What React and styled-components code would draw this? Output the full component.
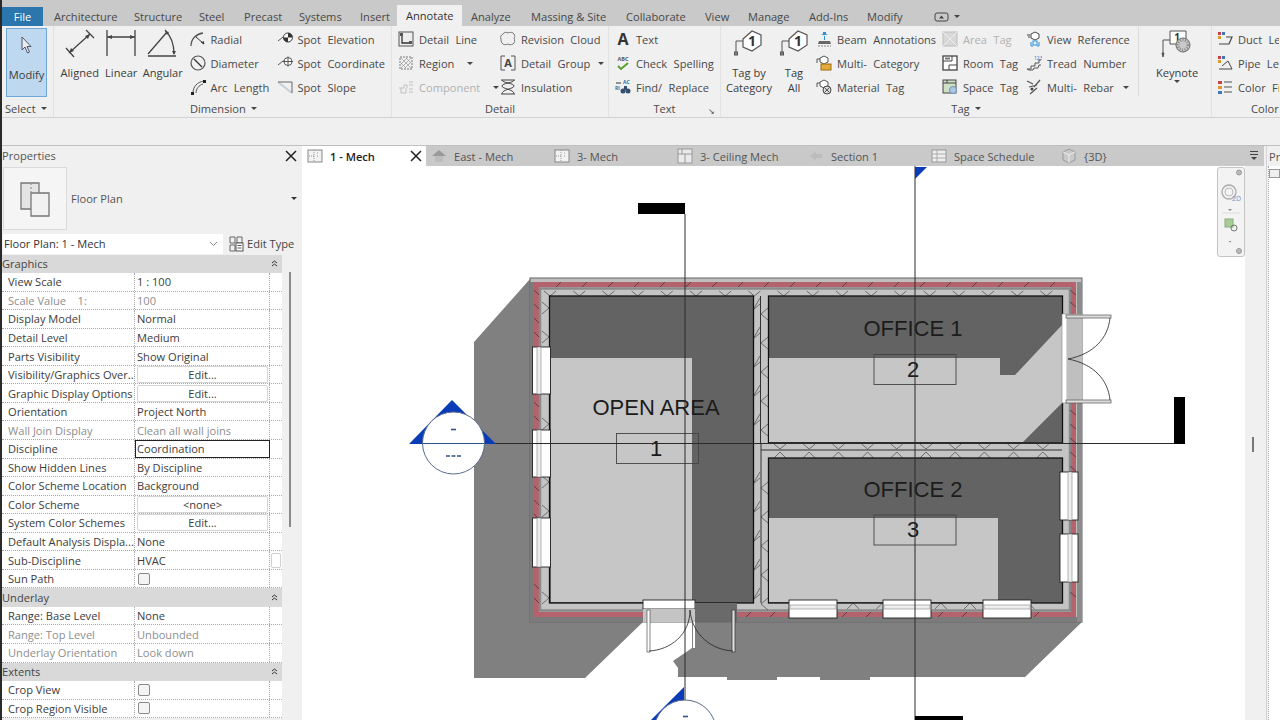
import styled, { createGlobalStyle } from "styled-components";

const GlobalStyle = createGlobalStyle`
html, body { margin:0; padding:0; background:#f0f0f0; }
body { font-family:"Open Sans","Noto Sans",sans-serif; font-size:11.1px; color:#3c3c3c; }
`

const Page = styled.div`
width:1280px;
height:720px;
overflow:hidden;
display:flex;
flex-direction:column;
border-left:2px solid #2a2a2a;
box-sizing:border-box;
`
const TabBar = styled.div`
height:26px;
flex:none;
background:#c9c9c9;
display:flex;
align-items:flex-end;
`
const FileTab = styled.div`
width:41px;
height:19px;
margin-right:2px;
background:#2a76ad;
color:#fff;
display:flex;
align-items:center;
justify-content:center;
`
const TopTab = styled.div`
width:${p => p.$w}px;
height:${p => p.$active ? 21 : 19}px;
padding-left:9px;
box-sizing:border-box;
display:flex;
align-items:center;
background:${p => p.$active ? "#f0f0f0" : "transparent"};
color:${p => p.$active ? "#333" : "#484848"};
`
const TabExtras = styled.div`
display:flex;
align-items:center;
gap:5px;
height:19px;
margin-left:9px;
`
const Caret = styled.span`
display:inline-block;
flex:none;
width:0;
height:0;
border-left:3px solid transparent;
border-right:3px solid transparent;
border-top:3px solid ${p => p.$color || "#444"};
margin-left:${p => p.$left || 0}px;
margin-right:${p => p.$right || 0}px;
`
const Ribbon = styled.div`
height:92px;
flex:none;
display:flex;
background:#f0f0f0;
border-bottom:1px solid #d2d2d2;
box-sizing:border-box;
`
const Panel = styled.div`
width:${p => p.$w}px;
flex:none;
display:flex;
flex-direction:column;
border-right:1px solid ${p => p.$noLine ? "transparent" : "#e2e2e2"};
box-sizing:border-box;
`
const PanelBody = styled.div`
height:72px;
margin-top:1px;
display:flex;
padding-left:${p => p.$pad || 0}px;
overflow:hidden;
`
const PanelTitle = styled.div`
height:17px;
margin-top:1px;
display:flex;
align-items:center;
justify-content:${p => p.$left ? "flex-start" : "center"};
padding-left:${p => p.$left || 0}px;
position:relative;
color:#484848;
`
const LaunchMark = styled.span`
position:absolute;
right:5px;
top:5px;
font-size:8px;
color:#444;
`
const ModifyButton = styled.div`
width:41px;
height:69px;
margin:1px 0 0 4px;
background:#bdd8ef;
border:1px solid #6ea8d8;
box-sizing:border-box;
display:flex;
flex-direction:column;
align-items:center;
padding-top:7px;
gap:11px;
`
const BigTool = styled.div`
width:${p => p.$w}px;
flex:none;
display:flex;
flex-direction:column;
align-items:center;
line-height:15px;
text-align:center;
`
const BigIcon = styled.div`
height:36px;
flex:none;
display:flex;
align-items:flex-start;
justify-content:center;
margin:1px 0;
`
const ToolColumn = styled.div`
width:${p => p.$w}px;
margin-left:${p => p.$left || 0}px;
flex:none;
display:flex;
flex-direction:column;
`
const Tool = styled.div`
height:24px;
display:flex;
align-items:center;
gap:5px;
white-space:nowrap;
word-spacing:3.5px;
color:${p => p.$off ? "#b0b0b0" : "#484848"};
`
const Divider = styled.div`
width:1px;
height:69px;
background:#dcdcdc;
flex:none;
`
const OptionsBand = styled.div`
height:28px;
flex:none;
background:#f0f0f0;
border-bottom:1px solid #c0c0c0;
box-sizing:border-box;
`
const Workspace = styled.div`
flex:1;
display:flex;
min-height:0;
`
const Properties = styled.div`
width:298px;
flex:none;
display:flex;
flex-direction:column;
position:relative;
background:#f0f0f0;
`
const PropsHeader = styled.div`
height:19.5px;
flex:none;
display:flex;
align-items:center;
justify-content:space-between;
padding:0 3px 0 0;
color:#555;
`
const TypeRow = styled.div`
height:66px;
flex:none;
display:flex;
align-items:center;
`
const Thumb = styled.div`
width:64px;
height:63px;
margin-left:1px;
background:#f5f5f5;
border:1px solid #dadada;
box-sizing:border-box;
display:flex;
align-items:center;
justify-content:center;
`
const TypeName = styled.div`
margin-left:4px;
flex:1;
color:#555;
`
const SelectorRow = styled.div`
height:20px;
margin-top:2px;
flex:none;
display:flex;
align-items:center;
`
const Combo = styled.div`
width:220px;
height:20px;
margin-left:1px;
background:#fff;
box-sizing:border-box;
padding:0 5px 0 1px;
display:flex;
align-items:center;
justify-content:space-between;
color:#333;
`
const EditType = styled.div`
display:flex;
align-items:center;
gap:2px;
margin-left:6px;
color:#444;
`
const PropList = styled.div`
width:280px;
margin-top:1px;
flex:1;
overflow:hidden;
`
const GroupRow = styled.div`
height:18.55px;
background:#d9d9d9;
display:flex;
align-items:center;
justify-content:space-between;
padding-right:4px;
box-sizing:border-box;
color:#444;
`
const PropRow = styled.div`
height:18.55px;
display:grid;
grid-template-columns:133px 135px 12px;
background:#fff;
box-sizing:border-box;
border-bottom:1px dotted #a8a8a8;
`
const NameCell = styled.div`
padding-left:6px;
display:flex;
align-items:center;
white-space:pre;
overflow:hidden;
color:${p => p.$off ? "#8e8e8e" : "#3c3c3c"};
border-right:1px dotted #a8a8a8;
`
const ValueCell = styled.div`
padding-left:2px;
display:flex;
align-items:center;
white-space:nowrap;
box-sizing:border-box;
color:${p => p.$off ? "#8e8e8e" : "#3c3c3c"};
border-right:1px dotted #a8a8a8;
outline:${p => p.$selected ? "1px solid #222" : "none"};
outline-offset:-1px;
`
const EditButton = styled.div`
flex:1;
height:15px;
margin-right:1px;
border:1px solid #d5d5d5;
border-radius:2px;
display:flex;
align-items:center;
justify-content:center;
`
const CheckBox = styled.span`
width:10px;
height:10px;
margin-left:1px;
border:1px solid #8a8a8a;
border-radius:2px;
background:#f4f4f4;
`
const ExtraCell = styled.div`
display:flex;
align-items:center;
justify-content:center;
`
const SpinBox = styled.span`
width:8px;
height:13px;
border:1px solid #d0d0d0;
border-radius:2px;
`
const PropScroll = styled.div`
position:absolute;
left:287px;
top:126px;
width:2px;
height:255px;
background:#8a8a8a;
`
const ViewArea = styled.div`
width:962px;
margin-left:2px;
flex:none;
display:flex;
flex-direction:column;
`
const ViewTabs = styled.div`
height:20px;
flex:none;
background:#c9c9c9;
display:flex;
position:relative;
`
const ViewTab = styled.div`
width:${p => p.$w}px;
flex:none;
box-sizing:border-box;
padding-left:${p => p.$pad}px;
display:flex;
align-items:center;
gap:7px;
white-space:nowrap;
background:${p => p.$active ? "#fff" : "transparent"};
color:${p => p.$active ? "#222" : "#555"};
font-weight:${p => p.$active ? 600 : 400};
`
const TabClose = styled.span`
margin-left:auto;
margin-right:4px;
display:flex;
`
const TabMenu = styled.div`
position:absolute;
right:6px;
top:5px;
display:flex;
flex-direction:column;
gap:2px;
align-items:center;
`
const MenuBar = styled.span`
width:8px;
height:1px;
background:#444;
`
const CanvasRow = styled.div`
flex:1;
display:flex;
min-height:0;
background:#fff;
`
const Canvas = styled.div`
width:943px;
flex:none;
position:relative;
overflow:hidden;
`
const PlanSvg = styled.svg`
display:block;
width:943px;
height:554px;
`
const NavBar = styled.div`
position:absolute;
right:0;
top:1px;
width:28px;
height:90px;
box-sizing:border-box;
background:#f3f3f3;
border:1px solid #c4c4c4;
border-radius:3px;
`
const ViewScroll = styled.div`
width:19px;
flex:none;
background:#f0f0f0;
position:relative;
`
const ScrollThumb = styled.div`
position:absolute;
left:7px;
top:271px;
width:2px;
height:15px;
background:#777;
`
const RightPanel = styled.div`
flex:1;
display:flex;
flex-direction:column;
margin-left:2px;
overflow:hidden;
background:#f0f0f0;
border-left:1px solid #d4d4d4;
`
const RightHead = styled.div`
height:20px;
padding-left:2px;
display:flex;
align-items:center;
color:#555;
`
const RightBody = styled.div`
flex:1;
margin:0 0 0 1px;
background:#fff;
padding-top:3px;
border-left:1px dotted #aaa;
`
const MinusBox = styled.div`
width:9px;
height:7px;
border:1px solid #999;
background:#eee;
`

const Ico = ({ w = 16, h = 16, children }) => (
   <svg width={w} height={h} viewBox={`0 0 ${w} ${h}`} fill="none" stroke="#555" strokeWidth="1" style={{ flex: "none" }}>{children}</svg>
)

const HexTag = ({ x = 0 }) => (
   <g transform={`translate(${x} 0)`}>
      <path d="M2 25V13H9" stroke="#555" />
      <rect x="0.5" y="24" width="3" height="3" fill="#888" stroke="#555" />
      <path d="M9 11L18 3l9 4v10l-9 6-9-4z" fill="#fff" stroke="#555" strokeWidth="1.2" />
      <text x="18" y="18" fontSize="14" fontWeight="700" fill="#333" stroke="none" textAnchor="middle" fontFamily="Open Sans">1</text>
   </g>
)

const icons = {
   cursor: <Ico h={20}><path d="M3 1l0 13 3-3 2.500 6 2-1-2.500-5.500 4 0z" fill="#e8edf2" stroke="#556" /></Ico>,
   aligned: <Ico w={36} h={30}><path d="M7 25L28 6M4 20l8 9M24 2l8 8" stroke="#444" strokeWidth="1.300" /><path d="M7 25l2-5 3 3zM28 6l-5 2 3 3z" fill="#444" stroke="none" /></Ico>,
   linear: <Ico w={32} h={30}><path d="M2 2v26M30 2v26M2 9h28" stroke="#444" strokeWidth="1.300" /><path d="M2 9l5-2v4zM30 9l-5-2v4z" fill="#444" stroke="none" /></Ico>,
   angular: <Ico w={32} h={30}><path d="M1 26L20 4M1 28h28M18 2c6 6 9 14 9 24" stroke="#444" strokeWidth="1.300" /><path d="M18 3l4 1-2 3zM27 27l-2-4 4 0z" fill="#444" stroke="none" /></Ico>,
   radial: <Ico><path d="M1 15C1 8 6 3 13 2" strokeWidth="1.300" /><path d="M6 6l8 7M11 11l3 2-1-3" stroke="#333" /></Ico>,
   diameter: <Ico><circle cx="8" cy="8" r="7" strokeWidth="1.200" /><path d="M4 4l8 8" stroke="#333" strokeWidth="1.300" /></Ico>,
   arc: <Ico><path d="M3 14C3 8 7 3 14 2M6 14C6 10 9 6 13 5" /><rect x="1" y="13" width="3" height="3" fill="#222" stroke="none" /><rect x="13" y="1" width="3" height="3" fill="#222" stroke="none" /></Ico>,
   spotElev: <Ico><path d="M1 10l5-4h9" /><path d="M11 2a4.500 4.500 0 1 1-.1 0z" fill="#fff" stroke="#333" /><path d="M11 2a4.500 4.500 0 0 1 4.500 4.500H11zM11 6.500H6.500A4.500 4.500 0 0 0 11 11z" fill="#333" stroke="none" /></Ico>,
   spotCoord: <Ico><path d="M1 10l5-4h9" /><circle cx="11" cy="6.500" r="4" fill="#fff" /><path d="M11 1.500v10M6 6.500h10" /></Ico>,
   spotSlope: <Ico><path d="M1 3l14 11" stroke="#c3d0dc" strokeWidth="2" /><path d="M1 3h14v11" stroke="#666" /></Ico>,
   detailLine: <Ico><rect x="1" y="1" width="14" height="14" fill="#eee" /><path d="M4 3v9h9" stroke="#333" strokeWidth="1.300" /><rect x="2" y="2" width="3" height="3" fill="#555" stroke="none" /><rect x="11" y="10" width="3" height="3" fill="#555" stroke="none" /></Ico>,
   region: <Ico><rect x="2" y="2" width="12" height="12" stroke="#777" strokeDasharray="2 1" /><path d="M3 9l6-6M3 13L13 3M7 13l6-6M3 3l10 10M8 3l5 5M3 8l5 5" stroke="#888" strokeWidth=".6" /></Ico>,
   component: <Ico><path d="M1 9h5V6h3v3h0M3 9v5h5V9M11 3h4M11 6h4M11 10h4M11 13h4" stroke="#c0c0c0" /></Ico>,
   cloud: <Ico><path d="M3 3c1-2 4-2 5-1 2-1 5-1 6 1 1 2 1 3 0 4 1 2 1 5-1 6-2 1-4 1-5 0-2 1-5 1-6-1-1-1-1-3-1-4-1-2 0-4 2-5z" stroke="#777" /></Ico>,
   detailGroup: <Ico><path d="M5 1H1v14h4M11 1h4v14h-4" stroke="#555" /><text x="8" y="12" fontSize="11" fontWeight="700" fill="#444" stroke="none" textAnchor="middle" fontFamily="Open Sans">A</text></Ico>,
   insulation: <Ico><path d="M2 1c0 3 12 3 12 6S2 10 2 15M14 1c0 3-12 3-12 6s12 3 12 8M1 1h14M1 15h14" stroke="#444" /></Ico>,
   textA: <Ico><text x="8" y="14" fontSize="16" fontWeight="700" fill="#333" stroke="none" textAnchor="middle" fontFamily="Open Sans">A</text></Ico>,
   spell: <Ico><text x="8" y="6" fontSize="5.500" fontWeight="700" fill="#555" stroke="none" textAnchor="middle" fontFamily="Open Sans">ABC</text><path d="M3 11l3 3 7-6" stroke="#5aa02c" strokeWidth="2" /></Ico>,
   find: <Ico><text x="0" y="11" fontSize="5" fontWeight="700" fill="#2a6fb5" stroke="none" fontFamily="Open Sans">Rl</text><text x="8" y="5" fontSize="5" fontWeight="700" fill="#2a6fb5" stroke="none" fontFamily="Open Sans">AC</text><path d="M1 4h5" stroke="#333" /><circle cx="8" cy="12" r="2.500" fill="#35516f" stroke="none" /><circle cx="13" cy="12" r="2.500" fill="#35516f" stroke="none" /><path d="M9 7h3v4H9z" fill="#35516f" stroke="none" /></Ico>,
   beam: <Ico><path d="M7 1h3v2l2 1H5l2-1z" fill="#2b8fd6" stroke="none" /><path d="M8.500 5v4" stroke="#2b8fd6" /><path d="M3 10h11l1 3H2z" fill="#666" stroke="none" /><path d="M2 15h13" stroke="#888" strokeDasharray="2 1" /></Ico>,
   multiCat: <Ico><path d="M1 8V4h3" /><path d="M4 3l4-2 4 2v4l-4 2-4-2z" fill="#fff" /><rect x="5" y="9" width="10" height="6" fill="#e5ab3a" stroke="#9a6d12" /></Ico>,
   material: <Ico><path d="M1 8V4h3" /><path d="M4 3l4-2 4 2v4l-4 2-4-2z" fill="#fff" /><circle cx="11" cy="11" r="4" fill="#ddd" stroke="#444" /><path d="M8.500 8.500l5 5M13.500 8.500l-5 5" stroke="#555" /></Ico>,
   areaTag: <Ico><rect x="1" y="1" width="14" height="14" fill="#d8d8d8" stroke="#bdbdbd" /><path d="M1 1l14 14M15 1L1 15" stroke="#eee" /></Ico>,
   roomTag: <Ico><rect x="1" y="1" width="14" height="14" fill="#fff" stroke="#444" strokeWidth="1.300" /><path d="M1 6h9V1M7 15v-5h8" stroke="#444" /><rect x="3" y="2.500" width="5" height="2" fill="#777" stroke="none" /></Ico>,
   spaceTag: <Ico><rect x="1" y="1" width="13" height="13" fill="#cfe0c6" stroke="#444" /><path d="M1 4h13M5 1v3" stroke="#444" /><circle cx="11" cy="11" r="3.500" fill="#a9c6e2" stroke="#7492b2" /></Ico>,
   viewRef: <Ico><path d="M1 4h3M2 6h2" stroke="#444" /><path d="M5 3l4-2 4 2v4l-4 2-4-2z" fill="#fff" stroke="#444" /><path d="M5 11v4h2M13 11v4h-2" stroke="#2b8fd6" /><rect x="7" y="10" width="4" height="4" stroke="#2b8fd6" /></Ico>,
   tread: <Ico><path d="M1 14h4v-3h4V8h4V5h2M1 14l2 1h4l1-2h4l1-3h2" stroke="#555" /><text x="8" y="5" fontSize="5" fill="#2b6fb5" stroke="none" fontFamily="Open Sans">123</text></Ico>,
   rebar: <Ico><path d="M1 2l6 3M14 1l-6 7M11 9l-7 6M3 8l8-2" stroke="#555" strokeWidth="1.200" /><circle cx="6" cy="10" r="1.500" fill="#444" stroke="none" /></Ico>,
   keynote: <Ico w={36} h={36}><path d="M4 25V12h7" stroke="#555" /><path d="M3 25l1 4 1-4z" fill="#555" /><path d="M11 3h16v13H11z" fill="#fff" stroke="#555" /><text x="18" y="13" fontSize="10" fontWeight="700" fill="#333" stroke="none" textAnchor="middle" fontFamily="Open Sans">1</text><circle cx="24" cy="17" r="7" fill="#c9c9c9" stroke="#666" /><circle cx="24" cy="17" r="5" fill="none" stroke="#888" strokeDasharray="1 1.500" strokeWidth="3" /></Ico>,
   duct: <Ico><rect x="1" y="1" width="3" height="3" fill="#c84444" stroke="none" /><rect x="5" y="1" width="3" height="3" fill="#3f78b8" stroke="none" /><rect x="1" y="5" width="3" height="3" fill="#d89a2e" stroke="none" /><path d="M2 13h10l3-7H9" stroke="#444" strokeWidth="1.200" /></Ico>,
   pipe: <Ico><rect x="1" y="1" width="3" height="3" fill="#c84444" stroke="none" /><rect x="5" y="1" width="3" height="3" fill="#3f78b8" stroke="none" /><rect x="1" y="5" width="3" height="3" fill="#d89a2e" stroke="none" /><path d="M2 14h13M5 11l6-5 4 8" stroke="#444" /></Ico>,
   colorFill: <Ico><rect x="1" y="2" width="4" height="3" fill="#c84444" stroke="none" /><rect x="1" y="7" width="4" height="3" fill="#d89a2e" stroke="none" /><rect x="1" y="12" width="4" height="3" fill="#3f78b8" stroke="none" /><path d="M7 3h8M7 8h8M7 13h8" /></Ico>,
   editType: <Ico><path d="M1 1h5v6H1zM8 1h5v6H8zM1 9h5v6H1z" stroke="#666" /><rect x="7" y="7" width="7" height="8" fill="#fff" stroke="#555" /><path d="M8.500 9.500h4M8.500 12h4" /></Ico>,
   plan: <Ico><rect x="1" y="2" width="14" height="12" fill="#f2f2f2" stroke="#888" /><path d="M7 2v6H1M7 8v6M10 5h2M10 8h2" stroke="#999" strokeDasharray="1 1" /></Ico>,
   elevation: <Ico><path d="M1 8l7-6 7 6z" fill="#9a9a9a" stroke="none" /><rect x="4" y="8" width="8" height="6" fill="#bcbcbc" stroke="none" /></Ico>,
   ceiling: <Ico><rect x="1" y="1" width="14" height="14" fill="#e9e9e9" stroke="#999" /><path d="M1 6h14M8 6v9M5 1v5" stroke="#999" /></Ico>,
   section: <Ico><path d="M2 8l6-5v3h6v4H8v3z" fill="#bdbdbd" stroke="none" /></Ico>,
   schedule: <Ico><rect x="1" y="2" width="14" height="12" fill="#eee" stroke="#999" /><path d="M1 6h14M1 10h14M6 2v12" stroke="#aaa" /></Ico>,
   box3d: <Ico><path d="M8 1l6 3v8l-6 3-6-3V4z" fill="#c9c9c9" stroke="#999" /><path d="M2 4l6 3 6-3M8 7v8" stroke="#eee" /></Ico>,
   close: <Ico w={12} h={12}><path d="M1 1l10 10M11 1L1 11" stroke="#222" strokeWidth="1.500" /></Ico>,
   upBox: <Ico w={15} h={10}><rect x="1" y="1" width="13" height="8" rx="2" stroke="#444" /><path d="M5 6.500h5L7.500 3.500z" fill="#444" stroke="none" /></Ico>,
   chevrons: <Ico w={7} h={7}><path d="M1 3l2.500-2L6 3M1 6l2.500-2L6 6" stroke="#333" /></Ico>,
   chevronDown: <Ico w={9} h={6}><path d="M1 1l3.500 3.500L8 1" stroke="#888" /></Ico>,
   bigPlan: <Ico w={32} h={36}><path d="M2 2h18v26H2z" fill="#e4e4e4" stroke="#777" strokeWidth="1.300" /><path d="M12 12h18v23H12z" fill="#f1f1f1" stroke="#777" strokeWidth="1.300" /><path d="M12 12V2M20 12h10" stroke="#888" strokeDasharray="2 2" /></Ico>,
}

const topTabs = [
   { label: "Architecture", w: 80 }, { label: "Structure", w: 65 }, { label: "Steel", w: 45 }, { label: "Precast", w: 55 },
   { label: "Systems", w: 61 }, { label: "Insert", w: 46 }, { label: "Annotate", w: 65, active: true }, { label: "Analyze", w: 60 },
   { label: "Massing & Site", w: 95 }, { label: "Collaborate", w: 79 }, { label: "View", w: 43 }, { label: "Manage", w: 61 },
   { label: "Add-Ins", w: 58 }, { label: "Modify", w: 67 },
]

const viewTabs = [
   { label: "East - Mech", w: 124, pad: 5, icon: "elevation" }, { label: "3- Mech", w: 123, pad: 4, icon: "plan" },
   { label: "3- Ceiling Mech", w: 131, pad: 4, icon: "ceiling" }, { label: "Section 1", w: 123, pad: 4, icon: "section" },
   { label: "Space Schedule", w: 130, pad: 4, icon: "schedule" }, { label: "{3D}", w: 100, pad: 4, icon: "box3d" },
]

const rows = [
   { group: "Graphics" },
   { name: "View Scale", value: "1 : 100" },
   { name: "Scale Value    1:", value: "100", off: true },
   { name: "Display Model", value: "Normal" },
   { name: "Detail Level", value: "Medium" },
   { name: "Parts Visibility", value: "Show Original" },
   { name: "Visibility/Graphics Over...", button: "Edit..." },
   { name: "Graphic Display Options", button: "Edit..." },
   { name: "Orientation", value: "Project North" },
   { name: "Wall Join Display", value: "Clean all wall joins", off: true },
   { name: "Discipline", value: "Coordination", selected: true },
   { name: "Show Hidden Lines", value: "By Discipline" },
   { name: "Color Scheme Location", value: "Background" },
   { name: "Color Scheme", button: "<none>" },
   { name: "System Color Schemes", button: "Edit..." },
   { name: "Default Analysis Displa...", value: "None" },
   { name: "Sub-Discipline", value: "HVAC", spin: true },
   { name: "Sun Path", check: true },
   { group: "Underlay" },
   { name: "Range: Base Level", value: "None" },
   { name: "Range: Top Level", value: "Unbounded", off: true },
   { name: "Underlay Orientation", value: "Look down", off: true },
   { group: "Extents" },
   { name: "Crop View", check: true },
   { name: "Crop Region Visible", check: true },
]

const SmallTool = ({ icon, label, off, drop }) => (
   <Tool $off={off}>
      {icons[icon]}
      <span>{label}</span>
      {drop && <Caret $left={drop} $color={"#444"} />}
   </Tool>
)

const range = (from, to, step) => {
   const out = []
   for (let v = from; v <= to; v += step) out.push(v)
   return out
}

// wall hatch, V marks along the insulation and short ticks on the red band
const wallMarks = [
   ...range(550, 1050, 29.200).map(x => `M${x - 6} 291L${x} 296L${x + 6} 291`),
   ...range(678, 1050, 29.200).filter(x => x < 640 || x > 770).map(x => `M${x - 6} 609L${x} 603L${x + 6} 609`),
   ...range(308, 600, 29).filter(y => y < 345 || (y > 395 && y < 428) || (y > 480 && y < 515) || y > 570).map(y => `M542 ${y - 6}L549 ${y}L542 ${y + 6}`),
   ...range(310, 600, 29).filter(y => y < 442 || y > 460).map(y => `M753 ${y}L760 ${y - 6}M760 ${y - 12}L753 ${y}M768 ${y + 10}L761 ${y + 4}L768 ${y - 2}`),
   ...range(780, 1050, 29.200).map(x => `M${x - 6} 444L${x} 449L${x + 6} 444M${x - 6} 458L${x} 452L${x + 6} 458`),
]
const redTicks = [
   ...range(556, 1060, 26).map(x => `M${x} 287L${x + 5} 282`),
   ...range(290, 600, 14).filter(y => y < 345 || (y > 395 && y < 428) || (y > 480 && y < 515) || y > 570).map(y => `M534 ${y}L539 ${y + 5}`),
   ...range(650, 1050, 24).filter(x => x < 640 || x > 740).map(x => `M${x} 617L${x + 5} 612`),
   ...range(290, 310, 12).map(y => `M1070 ${y}L1076 ${y + 5}`),
   ...range(410, 600, 14).filter(y => y < 468 || (y > 522 && y < 532) || y > 584).map(y => `M1070 ${y}L1076 ${y + 5}`),
]

const FloorPlan = () => (
   <PlanSvg viewBox="302 166 943 554" fontFamily="Liberation Sans">
      <path d="M530 279L474 342V678H585L643 622H530z" fill="#808080" />
      <path d="M692 622V648L673 661L678 668V677H727V680H777V677H820V680H870V677H1025L1082 622z" fill="#808080" />
      <rect x="530" y="278" width="552" height="344" fill="#bfbfbf" stroke="#666" />
      <rect x="530" y="282" width="4" height="340" fill="#7b7b7b" />
      <rect x="530" y="617" width="552" height="5" fill="#7b7b7b" />
      <rect x="1077" y="282" width="5" height="340" fill="#8c8c8c" />
      <rect x="536.500" y="284.500" width="537" height="330" fill="none" stroke="#b4636c" strokeWidth="5" />
      <rect x="540" y="288.500" width="530" height="322" fill="#c4c4c4" stroke="#8a8a8a" strokeWidth="2.500" />
      <path d={redTicks.join("")} stroke="#333" strokeWidth=".7" fill="none" />
      <path d={wallMarks.join("")} stroke="#555" strokeWidth=".8" fill="none" />

      <rect x="549.500" y="296" width="204" height="307" fill="#636363" stroke="#111" strokeWidth="1.300" />
      <rect x="551" y="358" width="141" height="244" fill="#c6c6c6" />
      <rect x="768.500" y="296" width="294" height="147" fill="#636363" stroke="#111" strokeWidth="1.300" />
      <path d="M769 358H1000V375H1015L1062 325V403L1023 442H769z" fill="#c6c6c6" />
      <rect x="768.500" y="458" width="294" height="145" fill="#636363" stroke="#111" strokeWidth="1.300" />
      <rect x="769" y="518" width="229" height="84" fill="#c6c6c6" />
      <path d="M760.500 296V443M761 443V603M761 450H1062" stroke="#222" strokeWidth=".9" fill="none" />

      <rect x="1062" y="314" width="5" height="89" fill="#fff" stroke="#888" strokeWidth=".6" />
      <rect x="1067" y="314" width="15" height="89" fill="#bfbfbf" />
      <rect x="1066" y="315" width="45" height="3" fill="#ddd" stroke="#555" strokeWidth=".7" />
      <rect x="1066" y="400" width="45" height="3" fill="#ddd" stroke="#555" strokeWidth=".7" />
      <path d="M1110 318C1108 338 1094 354 1068 359C1094 364 1108 380 1110 400" stroke="#222" strokeWidth=".8" fill="none" />

      {[347, 430, 518].map(y => (
         <g key={y}>
            <rect x="532.500" y={y} width="18" height={y === 518 ? 49 : 47} fill="#fff" stroke="#222" strokeWidth=".9" />
            <rect x="537" y={y} width="4" height={y === 518 ? 49 : 47} fill="#eee" stroke="#888" strokeWidth=".6" />
         </g>
      ))}
      {[472, 534].map(y => (
         <g key={y}>
            <rect x="1060" y={y} width="18" height="48" fill="#fff" stroke="#222" strokeWidth=".9" />
            <rect x="1068" y={y} width="4" height="48" fill="#eee" stroke="#888" strokeWidth=".6" />
         </g>
      ))}
      {[789, 883, 983].map(x => (
         <g key={x}>
            <rect x={x} y="600" width="48" height="18" fill="#fff" stroke="#222" strokeWidth=".9" />
            <rect x={x + 1} y="605" width="46" height="4" fill="#eee" stroke="#888" strokeWidth=".6" />
         </g>
      ))}

      <rect x="643" y="600" width="52" height="9" fill="#fff" stroke="#222" strokeWidth=".9" />
      <rect x="695" y="603" width="42" height="19" fill="#6a6a6a" />
      <rect x="643" y="609" width="52" height="13" fill="#c4c4c4" />
      <rect x="693" y="622" width="2" height="26" fill="#fff" />
      <rect x="647" y="610" width="3" height="42" fill="#fff" stroke="#555" strokeWidth=".7" />
      <rect x="732" y="610" width="3" height="42" fill="#ddd" stroke="#333" strokeWidth=".7" />
      <path d="M649 651C670 650 690 635 690 610C692 635 712 650 733 651" stroke="#222" strokeWidth=".8" fill="none" />

      <g fill="#1c1c1c" textAnchor="middle" fontSize="22">
         <text x="656" y="415">OPEN AREA</text>
         <text x="913" y="336">OFFICE 1</text>
         <text x="913" y="497">OFFICE 2</text>
         <text x="656" y="456">1</text>
         <text x="913" y="377">2</text>
         <text x="913" y="537">3</text>
      </g>
      <g fill="none" stroke="#444" strokeWidth=".9">
         <rect x="616.500" y="433.500" width="82" height="30" />
         <rect x="874" y="354.500" width="82" height="30" />
         <rect x="874" y="515" width="82" height="30" />
      </g>

      <path d="M685 214V720M915 166V720M422 443.500H1174" stroke="#2b2b2b" strokeWidth="1" fill="none" />
      <rect x="638" y="203" width="47" height="11" fill="#000" />
      <rect x="1174" y="397" width="11" height="47" fill="#000" />
      <rect x="915" y="716" width="48" height="4" fill="#000" />
      <path d="M915 167H927L915 179z" fill="#0a3cb8" />

      <path d="M452 400L496 444H409z" fill="#0a3cb8" />
      <circle cx="453.500" cy="443" r="31" fill="#fff" stroke="#5a6a8f" strokeWidth="1" />
      <path d="M423 443.500H484" stroke="#33508f" strokeWidth="1" />
      <path d="M451 429.500H456" stroke="#33508f" strokeWidth="1.600" />
      <path d="M446 456H461" stroke="#33508f" strokeWidth="1.600" strokeDasharray="4 1.500" />

      <path d="M684 687V720H651z" fill="#0a3cb8" />
      <circle cx="685" cy="731" r="31" fill="#fff" stroke="#5a6a8f" strokeWidth="1" />
      <path d="M683 716.500H688" stroke="#33508f" strokeWidth="1.600" />
   </PlanSvg>
)

export default function App() {
   return (
      <Page>
         <GlobalStyle />
         <TabBar>
            <FileTab>File</FileTab>
            {topTabs.map(t => <TopTab key={t.label} $w={t.w} $active={t.active}>{t.label}</TopTab>)}
            <TabExtras>{icons.upBox}<Caret /></TabExtras>
         </TabBar>

         <Ribbon>
            <Panel $w={52}>
               <PanelBody>
                  <ModifyButton>{icons.cursor}<span>Modify</span></ModifyButton>
               </PanelBody>
               <PanelTitle $left={3}>Select<Caret $left={5} /></PanelTitle>
            </Panel>
            <Panel $w={338}>
               <PanelBody $pad={5}>
                  <BigTool $w={41.500}><BigIcon>{icons.aligned}</BigIcon>Aligned</BigTool>
                  <BigTool $w={41.500}><BigIcon>{icons.linear}</BigIcon>Linear</BigTool>
                  <BigTool $w={41.500}><BigIcon>{icons.angular}</BigIcon>Angular</BigTool>
                  <ToolColumn $w={87} $left={6}>
                     <SmallTool icon="radial" label="Radial" />
                     <SmallTool icon="diameter" label="Diameter" />
                     <SmallTool icon="arc" label="Arc Length" />
                  </ToolColumn>
                  <ToolColumn $w={110}>
                     <SmallTool icon="spotElev" label="Spot Elevation" />
                     <SmallTool icon="spotCoord" label="Spot Coordinate" />
                     <SmallTool icon="spotSlope" label="Spot Slope" />
                  </ToolColumn>
               </PanelBody>
               <PanelTitle $left={136}>Dimension<Caret $left={5} /></PanelTitle>
            </Panel>
            <Panel $w={217}>
               <PanelBody $pad={6}>
                  <ToolColumn $w={102}>
                     <SmallTool icon="detailLine" label="Detail Line" />
                     <SmallTool icon="region" label="Region" drop={8} />
                     <SmallTool icon="component" label="Component" off drop={8} />
                  </ToolColumn>
                  <ToolColumn $w={105}>
                     <SmallTool icon="cloud" label="Revision Cloud" />
                     <SmallTool icon="detailGroup" label="Detail Group" drop={3} />
                     <SmallTool icon="insulation" label="Insulation" />
                  </ToolColumn>
               </PanelBody>
               <PanelTitle>Detail</PanelTitle>
            </Panel>
            <Panel $w={112}>
               <PanelBody $pad={6}>
                  <ToolColumn $w={104}>
                     <SmallTool icon="textA" label="Text" />
                     <SmallTool icon="spell" label="Check Spelling" />
                     <SmallTool icon="find" label="Find/ Replace" />
                  </ToolColumn>
               </PanelBody>
               <PanelTitle>Text<LaunchMark>↘</LaunchMark></PanelTitle>
            </Panel>
            <Panel $w={491}>
               <PanelBody $pad={5}>
                  <BigTool $w={46}><BigIcon><Ico w={30} h={30}><HexTag /></Ico></BigIcon>Tag by<br />Category</BigTool>
                  <BigTool $w={44}><BigIcon><Ico w={30} h={30}><HexTag x={1} /></Ico></BigIcon>Tag<br />All</BigTool>
                  <ToolColumn $w={126}>
                     <SmallTool icon="beam" label="Beam Annotations" />
                     <SmallTool icon="multiCat" label="Multi- Category" />
                     <SmallTool icon="material" label="Material Tag" />
                  </ToolColumn>
                  <ToolColumn $w={84}>
                     <SmallTool icon="areaTag" label="Area Tag" off />
                     <SmallTool icon="roomTag" label="Room Tag" />
                     <SmallTool icon="spaceTag" label="Space Tag" />
                  </ToolColumn>
                  <ToolColumn $w={112}>
                     <SmallTool icon="viewRef" label="View Reference" />
                     <SmallTool icon="tread" label="Tread Number" />
                     <SmallTool icon="rebar" label="Multi- Rebar" drop={4} />
                  </ToolColumn>
                  <Divider />
                  <BigTool $w={76}><BigIcon>{icons.keynote}</BigIcon>Keynote<Caret $left={0} /></BigTool>
               </PanelBody>
               <PanelTitle>Tag<Caret $left={5} /></PanelTitle>
            </Panel>
            <Panel $w={68} $noLine>
               <PanelBody $pad={5}>
                  <ToolColumn $w={90}>
                     <SmallTool icon="duct" label="Duct Legend" />
                     <SmallTool icon="pipe" label="Pipe Legend" />
                     <SmallTool icon="colorFill" label="Color Fill Legend" />
                  </ToolColumn>
               </PanelBody>
               <PanelTitle $left={39}>Color</PanelTitle>
            </Panel>
         </Ribbon>
         <OptionsBand />

         <Workspace>
            <Properties>
               <PropsHeader>Properties{icons.close}</PropsHeader>
               <TypeRow>
                  <Thumb>{icons.bigPlan}</Thumb>
                  <TypeName>Floor Plan</TypeName>
                  <Caret $color="#333" $right={3} />
               </TypeRow>
               <SelectorRow>
                  <Combo>Floor Plan: 1 - Mech{icons.chevronDown}</Combo>
                  <EditType>{icons.editType}Edit Type</EditType>
               </SelectorRow>
               <PropList>
                  {rows.map(r => r.group ? (
                     <GroupRow key={r.group}>{r.group}{icons.chevrons}</GroupRow>
                  ) : (
                     <PropRow key={r.name}>
                        <NameCell $off={r.off}>{r.name}</NameCell>
                        <ValueCell $off={r.off} $selected={r.selected}>
                           {r.value}
                           {r.button && <EditButton>{r.button}</EditButton>}
                           {r.check && <CheckBox />}
                        </ValueCell>
                        <ExtraCell>{r.spin && <SpinBox />}</ExtraCell>
                     </PropRow>
                  ))}
               </PropList>
               <PropScroll />
            </Properties>

            <ViewArea>
               <ViewTabs>
                  <ViewTab $w={124} $pad={5} $active>
                     {icons.plan}1 - Mech
                     <TabClose>{icons.close}</TabClose>
                  </ViewTab>
                  {viewTabs.map(t => <ViewTab key={t.label} $w={t.w} $pad={t.pad}>{icons[t.icon]}{t.label}</ViewTab>)}
                  <TabMenu><MenuBar /><MenuBar /><Caret /></TabMenu>
               </ViewTabs>
               <CanvasRow>
                  <Canvas>
                     <FloorPlan />
                     <NavBar>
                        <svg width="26" height="88" viewBox="0 0 26 88" fill="none">
                           <circle cx="21" cy="4.500" r="2.500" fill="#bbb" stroke="#999" />
                           <circle cx="11" cy="24" r="7" stroke="#aaa" strokeWidth="1.300" />
                           <circle cx="11" cy="24" r="4" stroke="#bbb" />
                           <text x="14" y="33" fontSize="7" fill="#6f97c9" fontFamily="Open Sans">2D</text>
                           <path d="M10 41h4l-2 2z" fill="#888" />
                           <path d="M4 45h18" stroke="#ddd" />
                           <rect x="7" y="51" width="8" height="8" fill="#a7cc98" stroke="#8aac7c" />
                           <circle cx="16" cy="60" r="3" stroke="#777" />
                           <path d="M10.500 73h3l-1.500 1.500z" fill="#888" />
                           <circle cx="21" cy="83" r="2.500" fill="#bbb" stroke="#999" />
                        </svg>
                     </NavBar>
                  </Canvas>
                  <ViewScroll><ScrollThumb /></ViewScroll>
               </CanvasRow>
            </ViewArea>

            <RightPanel>
               <RightHead>Pr</RightHead>
               <RightBody><MinusBox /></RightBody>
            </RightPanel>
         </Workspace>
      </Page>
   )
}
